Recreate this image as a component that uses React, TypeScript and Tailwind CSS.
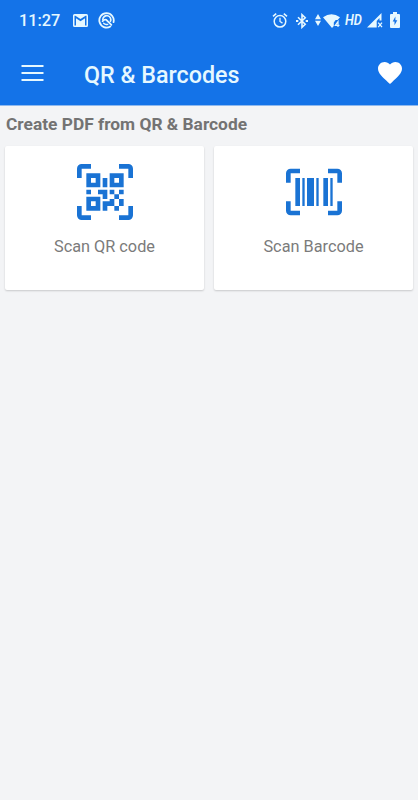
import type { ReactNode } from "react";

function StatusBar() {
  return (
    <div className="flex h-[41px] items-center pl-[19px] text-[#e6f8ff]">
      <span className="w-[54px] pt-px text-[16.3px] font-medium leading-5">11:27</span>
      <svg className="h-[13px] w-[15px]" viewBox="2 4 20 16" preserveAspectRatio="none" fill="currentColor">
        <path d="M20 18h-2V9.25L12 13 6 9.25V18H4V6h1.2l6.8 4.25L18.8 6H20m0-2H4c-1.11 0-2 .89-2 2v12a2 2 0 0 0 2 2h16a2 2 0 0 0 2-2V6a2 2 0 0 0-2-2z" />
      </svg>
      <svg className="ml-[10px] size-[17px]" viewBox="0 0 17 17" fill="none" stroke="currentColor" strokeLinecap="round">
        <path d="M12.3 14.5A7.2 7.2 0 1 1 15.5 10.2" strokeWidth="1.8" />
        <path d="M4.8 7.6A4 4 0 1 1 12.4 9.4" strokeWidth="1.6" />
        <path d="M4.6 9.2q1.7-2.4 3.6-1.4l5.2 5" strokeWidth="1.7" />
        <path d="M5.6 11.3q1.6 1.7 4.2 1" strokeWidth="1.3" />
      </svg>
      <svg className="ml-[157px] h-[17px] w-4" viewBox="0 0 16 17" fill="none" stroke="currentColor">
        <circle cx="8" cy="9.3" r="5.8" strokeWidth="1.5" />
        <path d="M8 5.7v3.8l2.5 1.6" strokeWidth="1.3" />
        <path d="M1 4.3l3.2-2.7M15 4.3l-3.2-2.7" strokeWidth="1.6" />
      </svg>
      <svg className="ml-2 h-4 w-3" viewBox="0 0 12 16" fill="none" stroke="currentColor" strokeWidth="1.6">
        <path d="M2 4.3l7.2 7L6 14.3V1.7l3.2 3L2 11.7" />
        <path d="M0 8h2.3M9.7 8H12" strokeWidth="2" />
      </svg>
      <svg className="ml-[7px] h-[12px] w-[6px] -translate-y-px" viewBox="0 0 6 12" fill="currentColor">
        <path d="M3 0L6 5.2H0zM3 12L6 6.8H0z" />
      </svg>
      <svg className="ml-[2px] h-[14px] w-[17px]" viewBox="0 0 17 14">
        <path d="M0 3.2Q8.5-2.5 17 3.2L14.6 6H12.7L10.8 8.6v3.3L9 14z" fill="currentColor" />
        <path d="M15 13V7.6l-2.7 3.7h4.2" fill="none" stroke="currentColor" strokeWidth="1.2" />
      </svg>
      <span className="ml-[5px] w-[19px] origin-left -translate-y-px scale-x-[0.88] text-[14.6px] font-semibold italic leading-4">HD</span>
      <svg className="ml-[3px] h-[15px] w-4" viewBox="0 0 16 15">
        <path d="M0 14.5L14.5 0v7.5h-2V5L9.7 8v6.5z" fill="currentColor" />
        <path d="M11.2 9.7l3.8 4.5M15 9.7l-3.8 4.5" stroke="currentColor" strokeWidth="1.3" />
      </svg>
      <svg className="ml-[7px] h-4 w-[10px] -translate-y-px" viewBox="0 0 10 16">
        <path d="M3 0h4v2h2q1 0 1 1v12q0 1-1 1H1q-1 0-1-1V3q0-1 1-1h2z" fill="currentColor" />
        <path d="M5.4 4.5L2.7 9.6h1.8v3.7l2.8-5.1H5.4z" fill="#1473e8" />
      </svg>
    </div>
  );
}

function ScanCard({ label, children }: { label: string; children: ReactNode }) {
  return (
    <button className="flex h-[143.5px] flex-col items-center rounded-[2px] bg-white pt-[18px] shadow-[0_1px_2px_rgba(0,0,0,0.18)]">
      <svg className="size-14" viewBox="0 0 24 24" fill="#1a73d4">
        {children}
      </svg>
      <span className="mt-[15px] text-[16.3px] leading-6 text-[#7b7b7b]">{label}</span>
    </button>
  );
}

export default function App() {
  return (
    <div className="min-h-screen bg-[#f3f4f6] font-['Roboto','Liberation_Sans',sans-serif]">
      <header className="h-[106px] border-b border-[#8fb9ee] bg-[#1473e8]">
        <StatusBar />
        <div className="flex h-16 items-center pl-[21px] pr-4 text-[#e6f8ff]">
          <svg className="h-4 w-[23px]" viewBox="0 0 23 16" stroke="currentColor" strokeWidth="2">
            <path d="M0.5 1h22M0.5 8h22M0.5 15h22" />
          </svg>
          <h1 className="ml-[40px] pt-[3px] text-[23.3px] font-medium leading-7">QR &amp; Barcodes</h1>
          <svg className="ml-auto h-[22px] w-6" viewBox="2 3 20 18.35" preserveAspectRatio="none" fill="#fff">
            <path d="M12 21.35l-1.45-1.32C5.4 15.36 2 12.28 2 8.5 2 5.42 4.42 3 7.5 3c1.74 0 3.41.81 4.5 2.09C13.09 3.81 14.76 3 16.5 3 19.58 3 22 5.42 22 8.5c0 3.78-3.4 6.86-8.55 11.54L12 21.35z" />
          </svg>
        </div>
      </header>
      <main className="px-[5px]">
        <h2 className="h-10 pl-px pt-[6px] text-[17.35px] font-bold leading-6 text-[#737373]">
          Create PDF from QR &amp; Barcode
        </h2>
        <div className="grid grid-cols-2 gap-[10px]">
          <ScanCard label="Scan QR code">
            <path d="M4,4H10V10H4V4M20,4V10H14V4H20M14,15H16V13H14V11H16V13H18V11H20V13H18V15H20V18H18V20H16V18H13V20H11V16H14V15M16,15V18H18V15H16M4,20V14H10V20H4M6,6V8H8V6H6M16,6V8H18V6H16M6,16V18H8V16H6M4,11H6V13H4V11M9,11H13V15H11V13H9V11M11,6H13V10H11V6M2,2V6H0V2A2,2 0 0,1 2,0H6V2H2M22,0A2,2 0 0,1 24,2V6H22V2H18V0H22M2,18V22H6V24H2A2,2 0 0,1 0,22V18H2M22,22V18H24V22A2,2 0 0,1 22,24H18V22H22Z" />
          </ScanCard>
          <ScanCard label="Scan Barcode">
            <path d="M4,6H6V18H4V6M7,6H8V18H7V6M9,6H12V18H9V6M13,6H14V18H13V6M16,6H18V18H16V6M19,6H20V18H19V6M2,4V8H0V4A2,2 0 0,1 2,2H6V4H2M22,2A2,2 0 0,1 24,4V8H22V4H18V2H22M2,16V20H6V22H2A2,2 0 0,1 0,20V16H2M22,20V16H24V20A2,2 0 0,1 22,22H18V20H22Z" />
          </ScanCard>
        </div>
      </main>
    </div>
  );
}
